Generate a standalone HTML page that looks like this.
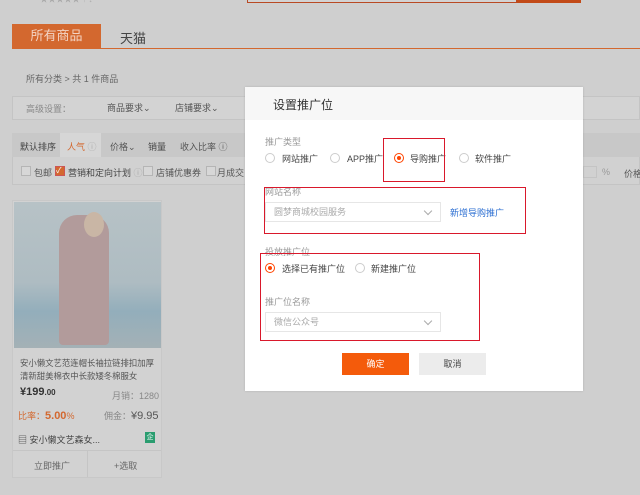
<!DOCTYPE html>
<html><head><meta charset="utf-8"><style>
*{margin:0;padding:0;box-sizing:border-box}
body{width:640px;height:495px;overflow:hidden;background:#cfcfcf;font-family:"Liberation Sans","Noto Sans CJK SC",sans-serif;font-size:9px;color:#555;position:relative}
.a{position:absolute;white-space:nowrap}
.rad{position:absolute;width:10px;height:10px;border:1px solid #ccc;border-radius:50%;background:#fff}
.rad.on{border-color:#f40}
.rad.on:after{content:"";position:absolute;left:2px;top:2px;width:4px;height:4px;border-radius:50%;background:#f40}
.sel{position:absolute;height:20px;border:1px solid #e6e6e6;background:#fff;color:#aaa;padding-left:8px;line-height:18px}
.sel:after{content:"";position:absolute;right:9px;top:5px;width:5px;height:5px;border-right:1px solid #aaa;border-bottom:1px solid #aaa;transform:rotate(45deg)}
.red{position:absolute;border:1px solid #d9182b}
.cb{position:absolute;width:10px;height:10px;border:1px solid #b5b5b5;background:#d7d7d7}
</style></head><body>
<div class="a" style="left:40px;top:-6px;color:#aaa;font-size:8px">★★★★★ ↑ ↓</div>
<div class="a" style="left:247px;top:0;width:270px;height:3px;border:1px solid #b94a24;border-top:0;background:#d3d3d3"></div>
<div class="a" style="left:517px;top:0;width:64px;height:3px;background:#c24a18"></div>
<div class="a" style="left:12px;top:24px;width:89px;height:24px;background:#d3682f;color:#f3d3c3;font-size:13px;line-height:24px;text-align:center">所有商品</div>
<div class="a" style="left:120px;top:28px;font-size:13px;color:#444">天猫</div>
<div class="a" style="left:12px;top:48px;width:628px;height:1px;background:#d3682f"></div>
<div class="a" style="left:26px;top:72px;color:#666">所有分类 &gt; 共 1 件商品</div>
<div class="a" style="left:12px;top:96px;width:628px;height:24px;border:1px solid #c4c4c4;background:#d3d3d3"></div>
<div class="a" style="left:26px;top:102px;color:#888">高级设置：</div>
<div class="a" style="left:107px;top:101px;color:#555">商品要求⌄</div>
<div class="a" style="left:175px;top:101px;color:#555">店铺要求⌄</div>
<div class="a" style="left:12px;top:133px;width:628px;height:52px;border:1px solid #c4c4c4;background:#d1d1d1"></div>
<div class="a" style="left:12px;top:133px;width:628px;height:24px;background:#c8c8c8"></div>
<div class="a" style="left:60px;top:133px;width:41px;height:24px;background:#d6d6d6"></div>
<div class="a" style="left:20px;top:140px;color:#444">默认排序</div>
<div class="a" style="left:67px;top:140px;color:#d3682f">人气 <span style="color:#aaa">ⓘ</span></div>
<div class="a" style="left:110px;top:140px;color:#555">价格⌄</div>
<div class="a" style="left:148px;top:140px;color:#444">销量</div>
<div class="a" style="left:180px;top:140px;color:#555">收入比率 ⓘ</div>
<div class="cb" style="left:21px;top:166px"></div><div class="a" style="left:34px;top:166px">包邮</div>
<div class="cb" style="left:55px;top:166px;background:#d3682f;border-color:#c55;color:#fff;font-size:8px;line-height:8px">✓</div><div class="a" style="left:68px;top:166px;color:#444">营销和定向计划 <span style="color:#aaa">ⓘ</span></div>
<div class="cb" style="left:143px;top:166px"></div><div class="a" style="left:156px;top:166px">店铺优惠券</div>
<div class="cb" style="left:206px;top:166px"></div><div class="a" style="left:217px;top:166px">月成交</div>
<div class="a" style="left:583px;top:166px;width:14px;height:12px;border:1px solid #c4c4c4"></div>
<div class="a" style="left:602px;top:167px;color:#999">%</div>
<div class="a" style="left:624px;top:167px">价格</div>
<!-- product card -->
<div class="a" style="left:12px;top:200px;width:150px;height:278px;border:1px solid #c8c8c8;background:#d2d2d2"></div>
<div class="a" style="left:14px;top:202px;width:147px;height:146px;background:linear-gradient(180deg,#b7c2c6 0%,#aebcc2 55%,#93aebb 75%,#a4b1b6 100%)"></div>
<div class="a" style="left:59px;top:215px;width:50px;height:130px;background:#b29b9b;border-radius:18px 18px 4px 4px"></div>
<div class="a" style="left:84px;top:212px;width:20px;height:25px;background:#c9b6a5;border-radius:50%"></div>
<div class="a" style="left:20px;top:357px;color:#555;line-height:13px;white-space:normal;width:140px;font-size:8.4px">安小懒文艺范连帽长袖拉链排扣加厚清新甜美棉衣中长款矮冬棉服女</div>
<div class="a" style="left:20px;top:386px;color:#333;font-size:11px;font-weight:bold">¥199<span style="font-size:8px">.00</span></div>
<div class="a" style="left:112px;top:389px;color:#888">月销：1280</div>
<div class="a" style="left:18px;top:409px;color:#d3682f">比率：<b style="font-size:11px">5.00</b>%</div>
<div class="a" style="left:104px;top:409px;color:#888">佣金：<span style="color:#555;font-size:11px">¥9.95</span></div>
<div class="a" style="left:18px;top:433px;color:#444">▤ 安小懒文艺森女...</div>
<div class="a" style="left:145px;top:432px;width:10px;height:11px;background:#2a9d70;color:#fff;font-size:7px;text-align:center;line-height:11px">企</div>
<div class="a" style="left:13px;top:450px;width:148px;height:1px;background:#c5c5c5"></div>
<div class="a" style="left:87px;top:451px;width:1px;height:26px;background:#c5c5c5"></div>
<div class="a" style="left:34px;top:459px;color:#666">立即推广</div>
<div class="a" style="left:114px;top:459px;color:#666">+选取</div>
<!-- modal -->
<div class="a" style="left:245px;top:87px;width:338px;height:304px;background:#fff;box-shadow:0 0 2px rgba(0,0,0,.15)"></div>
<div class="a" style="left:245px;top:87px;width:338px;height:33px;background:#f7f7f7"></div>
<div class="a" style="left:273px;top:96px;font-size:12px;color:#333">设置推广位</div>
<div class="a" style="left:265px;top:135px;color:#999">推广类型</div>
<div class="rad" style="left:265px;top:153px"></div><div class="a" style="left:282px;top:152px;color:#444">网站推广</div>
<div class="rad" style="left:330px;top:153px"></div><div class="a" style="left:347px;top:152px;color:#444">APP推广</div>
<div class="rad on" style="left:394px;top:153px"></div><div class="a" style="left:410px;top:152px;color:#444">导购推广</div>
<div class="rad" style="left:459px;top:153px"></div><div class="a" style="left:475px;top:152px;color:#444">软件推广</div>
<div class="red" style="left:383px;top:138px;width:62px;height:44px"></div>
<div class="a" style="left:265px;top:185px;color:#999">网站名称</div>
<div class="sel" style="left:265px;top:202px;width:176px">圆梦商城校园服务</div>
<div class="a" style="left:450px;top:206px;color:#2b6ed2">新增导购推广</div>
<div class="red" style="left:264px;top:187px;width:262px;height:47px"></div>
<div class="a" style="left:265px;top:245px;color:#999">投放推广位</div>
<div class="rad on" style="left:265px;top:263px"></div><div class="a" style="left:282px;top:262px;color:#444">选择已有推广位</div>
<div class="rad" style="left:355px;top:263px"></div><div class="a" style="left:371px;top:262px;color:#444">新建推广位</div>
<div class="a" style="left:265px;top:295px;color:#999">推广位名称</div>
<div class="sel" style="left:265px;top:312px;width:176px">微信公众号</div>
<div class="red" style="left:260px;top:253px;width:220px;height:88px"></div>
<div class="a" style="left:342px;top:353px;width:67px;height:22px;background:#f45b0b;color:#fff;text-align:center;line-height:22px">确定</div>
<div class="a" style="left:419px;top:353px;width:67px;height:22px;background:#ececec;color:#444;text-align:center;line-height:22px">取消</div>
</body></html>
